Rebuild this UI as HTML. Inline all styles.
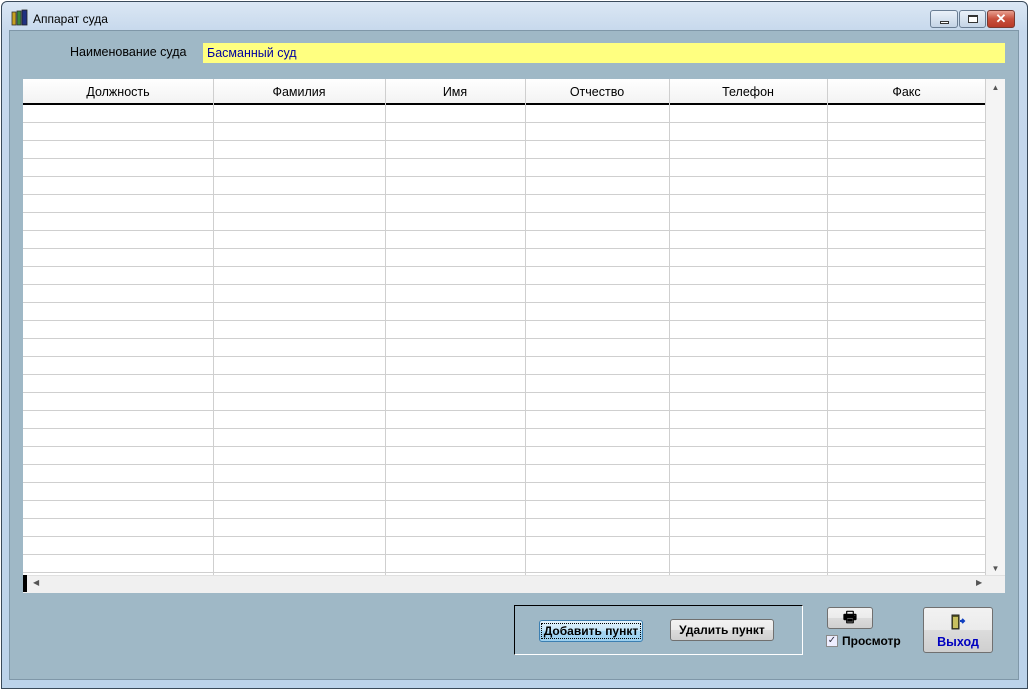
<!DOCTYPE html>
<html><head><meta charset="utf-8"><style>
*{margin:0;padding:0;box-sizing:border-box}
body{width:1029px;height:690px;background:#fff;font-family:"Liberation Sans",sans-serif;font-size:12px;position:relative;overflow:hidden}
.frame{position:absolute;left:1px;top:1px;width:1027px;height:688px;border:1px solid #3a4a5a;border-radius:6px 6px 0 0;background:linear-gradient(#dbe7f4,#c6d8ec 30px,#bcd3ea);}
.content{position:absolute;left:9px;top:30px;width:1010px;height:650px;background:#9fb8c6;border:1px solid #7f97a8}
.a{position:absolute}
.grid{position:absolute;left:23px;top:79px;width:982px;height:514px;background:#fff}
.hdr{position:absolute;left:0;top:0;width:963px;height:26px;background:linear-gradient(#fff,#f3f3f3);border-bottom:2px solid #000}
.hdr div{position:absolute;top:6px;text-align:center;color:#000;font-size:12.5px}
.rows{position:absolute;left:0;top:27px;width:963px;height:469px;background:repeating-linear-gradient(transparent 0 16px,#cfcfcf 16px 17px,transparent 17px 18px)}
.col{position:absolute;top:0;width:1px;height:496px;background:#cfcfcf}
.btn{position:absolute;border:1px solid #707070;border-radius:3px;background:linear-gradient(#f2f2f2,#ebebeb 50%,#dcdcdc 50%,#cfcfcf);font-weight:bold;font-size:12px;text-align:center}
</style></head><body>
<div class="frame"></div>
<svg class="a" style="left:11px;top:9px" width="18" height="17" viewBox="0 0 18 17"><rect x="1" y="3" width="4" height="13" fill="#c8a020" stroke="#333" stroke-width=".8"/><rect x="6" y="2" width="4" height="14" fill="#3a8a3a" stroke="#333" stroke-width=".8"/><rect x="11" y="1" width="5" height="15" fill="#203080" stroke="#222" stroke-width=".8"/></svg>
<div class="a" style="left:33px;top:12px;font-size:12px">Аппарат суда</div>
<div class="a" style="left:930px;top:10px;width:28px;height:18px;border:1px solid #6a7d93;border-radius:3px;background:linear-gradient(#eaf1f9,#c4d4e6)"><div class="a" style="left:9px;top:10px;width:9px;height:3px;border:1px solid #333;background:#fff"></div></div>
<div class="a" style="left:959px;top:10px;width:27px;height:18px;border:1px solid #6a7d93;border-radius:3px;background:linear-gradient(#eaf1f9,#c4d4e6)"><div class="a" style="left:8px;top:4px;width:10px;height:8px;border:1px solid #333;border-top-width:2px;background:#fff"></div></div>
<div class="a" style="left:987px;top:10px;width:28px;height:18px;border:1px solid #7a3a30;border-radius:3px;background:linear-gradient(#e8a090,#c8503c 50%,#b83a28);color:#fff;font-weight:bold;text-align:center;font-size:13px;line-height:16px">✕</div>
<div class="content"></div>
<div class="a" style="left:70px;top:45px;font-size:12.5px">Наименование суда</div>
<div class="a" style="left:203px;top:43px;width:802px;height:20px;background:#ffff80;color:#0000a0;font-size:12.5px;padding:3px 4px">Басманный суд</div>
<div class="grid">
 <div class="hdr">
  <div style="left:0;width:190px">Должность</div>
  <div style="left:190px;width:172px">Фамилия</div>
  <div style="left:362px;width:140px">Имя</div>
  <div style="left:502px;width:144px">Отчество</div>
  <div style="left:646px;width:158px">Телефон</div>
  <div style="left:804px;width:159px">Факс</div>
 </div>
 <div class="rows"></div>
 <div class="col" style="left:190px"></div><div class="col" style="left:362px"></div><div class="col" style="left:502px"></div><div class="col" style="left:646px"></div><div class="col" style="left:804px"></div><div class="col" style="left:962px"></div>
 <div class="a" style="left:963px;top:0;width:19px;height:496px;background:#f4f4f4;color:#555;font-size:8px;text-align:center"><div style="margin-top:4px">▲</div><div style="margin-top:472px">▼</div></div>
 <div class="a" style="left:0;top:496px;width:982px;height:18px;background:#f0f0f0;border-top:1px solid #e0e0e0"></div>
 <div class="a" style="left:0;top:496px;width:4px;height:17px;background:#000"></div>
 <div class="a" style="left:10px;top:499px;font-size:8px;color:#555">◀</div>
 <div class="a" style="left:953px;top:499px;font-size:8px;color:#555">▶</div>
</div>
<div class="a" style="left:514px;top:605px;width:289px;height:50px;border:1px solid #000;border-right-color:#fff;border-bottom-color:#fff"></div>
<div class="btn" style="left:539px;top:620px;width:104px;height:22px;line-height:20px;border-color:#3c7fb1;background:linear-gradient(#e6f4fc,#bfe3f8 50%,#a6d6f3 50%,#9ccfee)"><span style="outline:1px dotted #000;padding:0 2px">Добавить пункт</span></div>
<div class="btn" style="left:670px;top:619px;width:104px;height:22px;line-height:20px">Удалить пункт</div>
<div class="btn" style="left:827px;top:607px;width:46px;height:22px;line-height:20px;font-size:15px">🖶</div>
<div class="a" style="left:826px;top:635px;width:12px;height:12px;border:1px solid #8a8a8a;background:#eef;font-size:10px;line-height:10px;text-align:center;color:#334">✓</div>
<div class="a" style="left:842px;top:634px;font-weight:bold;font-size:12px">Просмотр</div>
<div class="btn" style="left:923px;top:607px;width:70px;height:46px;font-weight:bold">
 <svg style="margin-top:6px" width="16" height="16" viewBox="0 0 16 16"><rect x="2" y="1" width="7" height="14" fill="#5a5a20" stroke="#222"/><rect x="3" y="3" width="5" height="11" fill="#c8c060"/><path d="M10 7h4M12 5l2 2-2 2" stroke="#1040c0" stroke-width="2" fill="none"/></svg>
 <div style="color:#0000c0;font-size:12.5px;margin-top:2px">Выход</div>
</div>
</body></html>
